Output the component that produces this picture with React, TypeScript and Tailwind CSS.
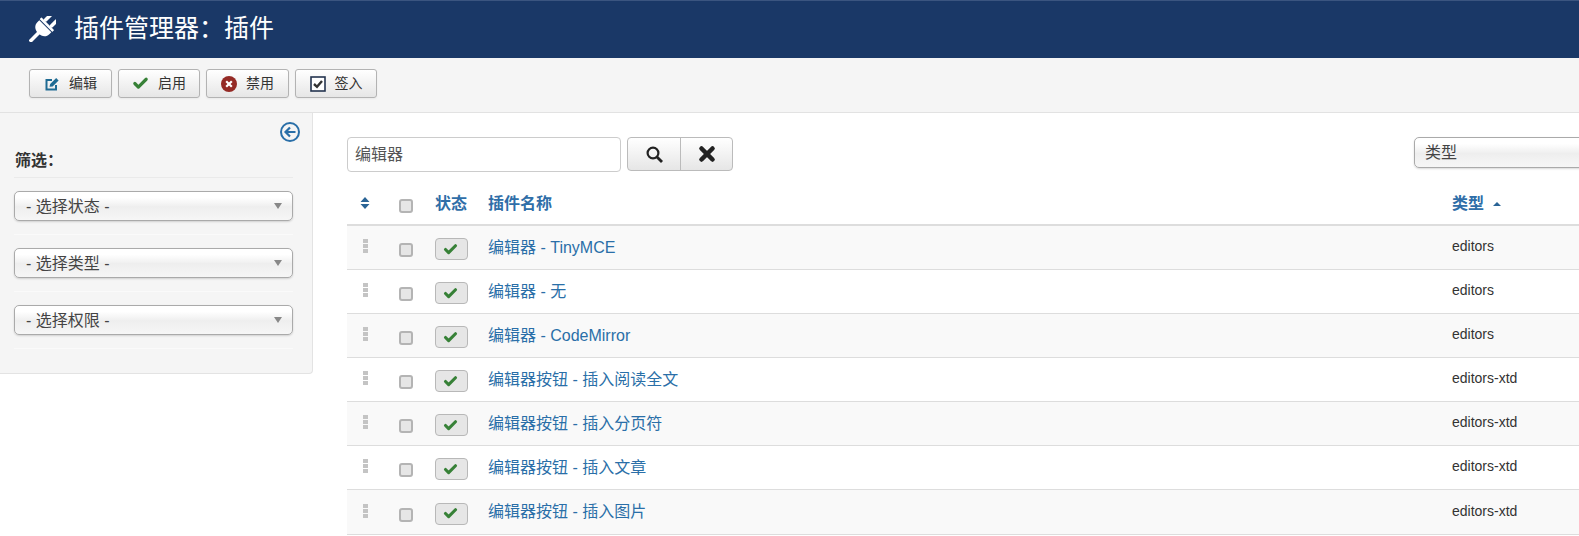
import { Check, X } from 'lucide-react';

const rows = [
  { name: '编辑器 - TinyMCE', folder: 'editors' },
  { name: '编辑器 - 无', folder: 'editors' },
  { name: '编辑器 - CodeMirror', folder: 'editors' },
  { name: '编辑器按钮 - 插入阅读全文', folder: 'editors-xtd' },
  { name: '编辑器按钮 - 插入分页符', folder: 'editors-xtd' },
  { name: '编辑器按钮 - 插入文章', folder: 'editors-xtd' },
  { name: '编辑器按钮 - 插入图片', folder: 'editors-xtd' },
];

const filters = ['- 选择状态 -', '- 选择类型 -', '- 选择权限 -'];

function PlugIcon() {
  return (
    <svg viewBox="0 0 27 26" className="h-[26px] w-[27px]">
      <g transform="rotate(45 13.5 13)" fill="#fff">
        <rect x="7.5" y="-4" width="3.6" height="10" rx="1.8" />
        <rect x="15.9" y="-4" width="3.6" height="10" rx="1.8" />
        <rect x="4.5" y="5.5" width="18" height="2.6" rx="0.6" />
        <path d="M5 9h17v2.5c0 4.6-3.2 7.5-8.5 7.5S5 16.1 5 11.5z" />
        <rect x="11.7" y="18" width="3.6" height="13" />
      </g>
    </svg>
  );
}

function EditIcon() {
  return (
    <svg viewBox="0 0 16 16" className="h-4 w-4">
      <path d="M12 9v4.5H2.5V4H8" fill="none" stroke="#1f6b93" strokeWidth="2" />
      <path d="M5.5 10.8 6.2 8l6-6L14.6 4.4l-6 6z" fill="#1f6b93" />
    </svg>
  );
}

function DisableIcon() {
  return (
    <svg viewBox="0 0 16 16" className="h-4 w-4">
      <circle cx="8" cy="8" r="8" fill="#942a25" />
      <path d="M5.2 5.2l5.6 5.6M10.8 5.2l-5.6 5.6" stroke="#fff" strokeWidth="2.2" />
    </svg>
  );
}

function CheckinIcon() {
  return (
    <svg viewBox="0 0 16 16" className="h-4 w-4">
      <rect x="1" y="1" width="14" height="14" fill="#fff" stroke="#24344f" strokeWidth="1.6" />
      <path d="M4 8l3 2.8L12 5" fill="none" stroke="#333" strokeWidth="2.4" />
    </svg>
  );
}

function BackIcon() {
  return (
    <svg viewBox="0 0 20 20" className="h-5 w-5">
      <circle cx="10" cy="10" r="9" fill="none" stroke="#2a6fa8" strokeWidth="2" />
      <path d="M15.5 10H6M10 5.5 5.5 10l4.5 4.5" fill="none" stroke="#2a6fa8" strokeWidth="2.2" />
    </svg>
  );
}

function SearchIcon() {
  return (
    <svg viewBox="0 0 17 17" className="h-[17px] w-[17px]">
      <circle cx="7" cy="7" r="5.4" fill="none" stroke="#222" strokeWidth="2.2" />
      <path d="M11 11l5 5" stroke="#222" strokeWidth="2.8" />
    </svg>
  );
}

function SortIcon() {
  return (
    <svg viewBox="0 0 10 12" className="h-3 w-[10px]">
      <path d="M5 0l4.5 5h-9zM5 12 .5 7h9z" fill="#2a6496" />
    </svg>
  );
}

function Box() {
  return <span className="block h-[14px] w-[14px] rounded-[3px] border-2 border-[#b4b4b4] bg-[#e6e6e6]" />;
}

function ToolButton({ label, icon, width }: { label: string; icon: React.ReactNode; width: string }) {
  return (
    <button className={`flex h-[29px] items-center justify-center gap-[9px] rounded-[3px] border border-[#b3b3b3] bg-gradient-to-b from-white to-[#e6e6e6] text-[14px] text-[#333] shadow-[0_1px_2px_rgba(0,0,0,0.05)] ${width}`}>
      {icon}
      <span>{label}</span>
    </button>
  );
}

function ChosenSelect({ label, className }: { label: string; className: string }) {
  return (
    <div className={`flex items-center rounded-[5px] border border-[#aaa] bg-[linear-gradient(#fff_20%,#f0f0f0_50%,#eee_52%,#f6f6f6)] text-[16px] leading-none text-[#444] shadow-[0_1px_2px_rgba(0,0,0,0.15)] ${className}`}>
      <span>{label}</span>
    </div>
  );
}

export default function App() {
  return (
    <div className="h-[536px] w-[1579px] overflow-hidden bg-white font-['Liberation_Sans','Noto_Sans_CJK_SC',sans-serif] text-[#333]">
      <header className="flex h-[58px] items-center border-t border-[#3b5580] bg-[#1a3867] pb-px pl-[29px]">
        <PlugIcon />
        <h1 className="ml-[18px] text-[25px] font-normal text-white">插件管理器：插件</h1>
      </header>

      <div className="flex h-[55px] items-start gap-[6px] border-b border-[#e2e2e2] bg-[#f5f5f5] pl-[29px] pt-[11px]">
        <ToolButton label="编辑" width="w-[83px]" icon={<EditIcon />} />
        <ToolButton label="启用" width="w-[82px]" icon={<Check className="h-[17px] w-[17px] text-[#378137]" strokeWidth={4.5} />} />
        <ToolButton label="禁用" width="w-[83px]" icon={<DisableIcon />} />
        <ToolButton label="签入" width="w-[82px]" icon={<CheckinIcon />} />
      </div>

      <div className="flex items-start">
        <aside className="h-[261px] w-[313px] shrink-0 rounded-br-[4px] border-r border-b border-[#e3e3e3] bg-[#f5f5f5] pl-[14px] pr-[19px]">
          <div className="-mr-[7px] flex justify-end pt-[9px]">
            <BackIcon />
          </div>
          <h4 className="mt-[9px] pl-px text-[16px] font-bold leading-[20px] text-[#333]">筛选：</h4>
          <div className="mt-[6px] border-t border-[#eaeaea]">
            {filters.map((f) => (
              <div key={f} className="relative h-[57px] border-b border-[#fafafa] pt-[13px]">
                <ChosenSelect label={f} className="h-[30px] pl-[11px] pt-[2px]" />
                <span className="absolute right-[11px] top-[25px] h-0 w-0 border-x-[4.5px] border-t-[6px] border-x-transparent border-t-[#888]" />
              </div>
            ))}
          </div>
        </aside>

        <main className="min-w-0 flex-1 pl-[34px] pt-[24px]">
          <div className="flex items-start">
            <div className="flex h-[35px] w-[274px] shrink-0 items-center rounded-[4px] border border-[#ccc] bg-white pl-[7px] text-[16px] text-[#555]">
              编辑器
            </div>
            <div className="ml-[6px] flex h-[34px] w-[106px] shrink-0 rounded-[4px] border border-[#bbb] bg-gradient-to-b from-white to-[#e6e6e6]">
              <span className="flex w-[53px] items-center justify-center border-r border-[#bbb]">
                <SearchIcon />
              </span>
              <span className="flex flex-1 items-center justify-center">
                <X className="h-[22px] w-[22px] text-[#222]" strokeWidth={5} />
              </span>
            </div>
            <ChosenSelect label="类型" className="ml-[681px] h-[31px] w-[220px] shrink-0 pl-[10px]" />
          </div>

          <div className="mt-[12px] border-b border-[#ddd]">
            <div className="flex h-[42px] items-center border-b-2 border-[#ddd] text-[16px] font-bold text-[#2f6ea8]">
              <span className="flex w-[52px] justify-center pb-[3px] pr-[17px]"><SortIcon /></span>
              <span className="flex w-[36px] pt-[3px]"><Box /></span>
              <span className="w-[54px]">状态</span>
              <span className="w-[963px] -translate-x-px">插件名称</span>
              <span className="flex items-center gap-[9px]">类型<span className="h-0 w-0 border-x-[4px] border-b-[4px] border-x-transparent border-b-[#2a6496]" /></span>
            </div>
            {rows.map((r, i) => (
              <div key={r.name} className={`flex h-[44px] items-center border-b border-[#ddd] last:border-b-0 ${i % 2 === 0 ? 'bg-[#f9f9f9]' : 'bg-white'}`}>
                <span className="flex w-[52px] justify-center pb-[3px] pr-[15px]">
                  <span className="flex flex-col gap-px">
                    <i className="block h-1 w-[5px] bg-[#c4c4c4]" />
                    <i className="block h-1 w-[5px] bg-[#c4c4c4]" />
                    <i className="block h-1 w-[5px] bg-[#c4c4c4]" />
                  </span>
                </span>
                <span className="flex w-[36px] pt-[5px]"><Box /></span>
                <span className="flex w-[54px] pt-[3px]">
                  <span className="flex h-[22px] w-[33px] items-center justify-center rounded-[4px] border border-[#b8b8b8] bg-[#e6e6e6] pr-[2px]">
                    <Check className="h-[15px] w-[15px] text-[#378137]" strokeWidth={5} />
                  </span>
                </span>
                <a className="w-[963px] -translate-x-px text-[16px] text-[#2a6fa8]">{r.name}</a>
                <span className="pb-[2px] text-[14px] text-[#333]">{r.folder}</span>
              </div>
            ))}
          </div>
        </main>
      </div>
    </div>
  );
}
